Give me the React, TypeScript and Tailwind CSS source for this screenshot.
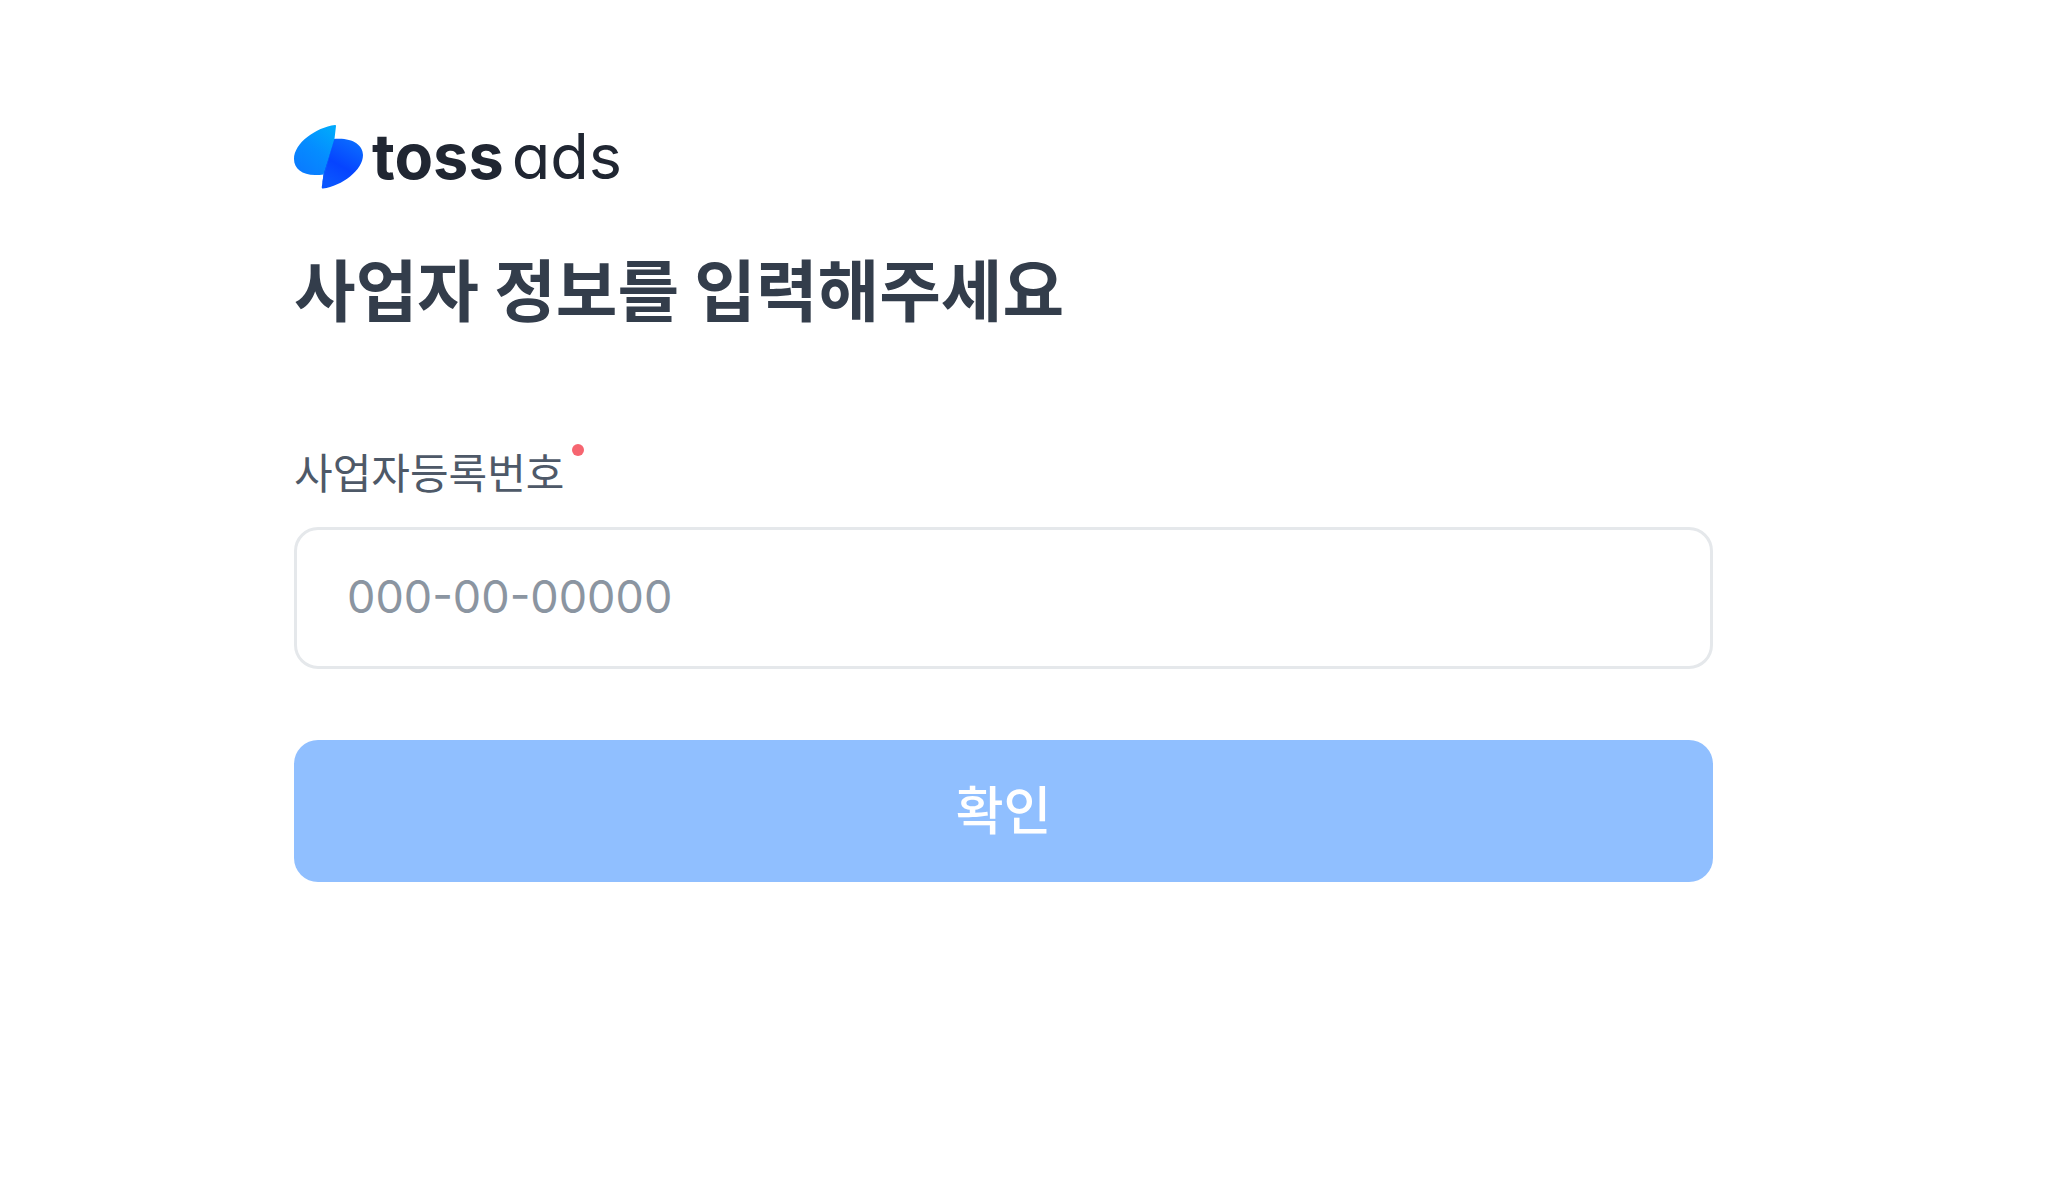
import { useState } from "react";

function TossAdsLogo() {
  return (
    <div className="flex items-start gap-2 text-[#202632]">
      <svg width="70" height="64" viewBox="0 0 70 64" fill="none" aria-hidden="true">
        <defs>
          <linearGradient id="wingLeft" x1="8" y1="48" x2="40" y2="6" gradientUnits="userSpaceOnUse">
            <stop stopColor="#0a7bff" />
            <stop offset="0.5" stopColor="#058cff" />
            <stop offset="1" stopColor="#00a8fc" />
          </linearGradient>
          <linearGradient id="wingRight" x1="58" y1="14" x2="34" y2="56" gradientUnits="userSpaceOnUse">
            <stop stopColor="#0a6cff" />
            <stop offset="0.6" stopColor="#0644ff" />
            <stop offset="1" stopColor="#0a55ff" />
          </linearGradient>
        </defs>
        <path
          d="M39 14C57 12 69 19 69 30C69 45 48 61 29 63.500C28 63.600 27.600 63 27.800 62L33 24Z"
          fill="url(#wingRight)"
        />
        <path
          d="M42 1C42 0.3 41.600 0 41 0C22 2.500 0 18 0 34C0 43.500 8 50 21 50C24.500 50 27 50 29.500 49.500C34 36 38 22 40.500 13.800Z"
          fill="url(#wingLeft)"
        />
        <path d="M40.500 13.800C38 22 34 36 29.500 49.500L27.800 62C31 48 36 30 40.500 13.800Z" fill="#0a5cff" />
      </svg>
      <p className="flex items-baseline gap-2 font-['Inter',sans-serif] text-[63px] leading-[62px] [font-feature-settings:'cv11']">
        <span className="font-bold">toss</span>
        <span className="font-normal">ads</span>
      </p>
    </div>
  );
}

export default function App() {
  const [number, setNumber] = useState("");

  return (
    <main className="min-h-screen bg-white pt-[125px] pr-[335px] pl-[294px] font-['Noto_Sans_CJK_KR',sans-serif]">
      <TossAdsLogo />

      <h1 className="mt-[50px] text-[67px] leading-[96px] font-bold text-[#333d4b]">
        사업자 정보를 입력해주세요
      </h1>

      <form className="mt-[106px]" onSubmit={(e) => e.preventDefault()}>
        <label htmlFor="business-number" className="flex items-start gap-2 text-[42px] leading-[60px] text-[#4e5968]">
          사업자등록번호
          <span className="mt-[3px] size-3 rounded-full bg-[#f66570]" aria-hidden="true" />
        </label>
        <input
          id="business-number"
          type="text"
          inputMode="numeric"
          required
          value={number}
          onChange={(e) => setNumber(e.target.value)}
          placeholder="000-00-00000"
          className="mt-[26px] block h-[142px] w-full rounded-3xl border-3 border-[#e5e8eb] px-[50px] pb-1 font-['Inter',sans-serif] text-[45px] text-[#333d4b] placeholder:text-[#8b95a1] focus:outline-none"
        />
        <button
          type="submit"
          disabled={!number.trim()}
          className="mt-[71px] h-[142px] w-full rounded-3xl bg-[#3182f6] pb-1.5 text-[52px] font-medium text-white disabled:bg-[#90bfff]"
        >
          확인
        </button>
      </form>
    </main>
  );
}
